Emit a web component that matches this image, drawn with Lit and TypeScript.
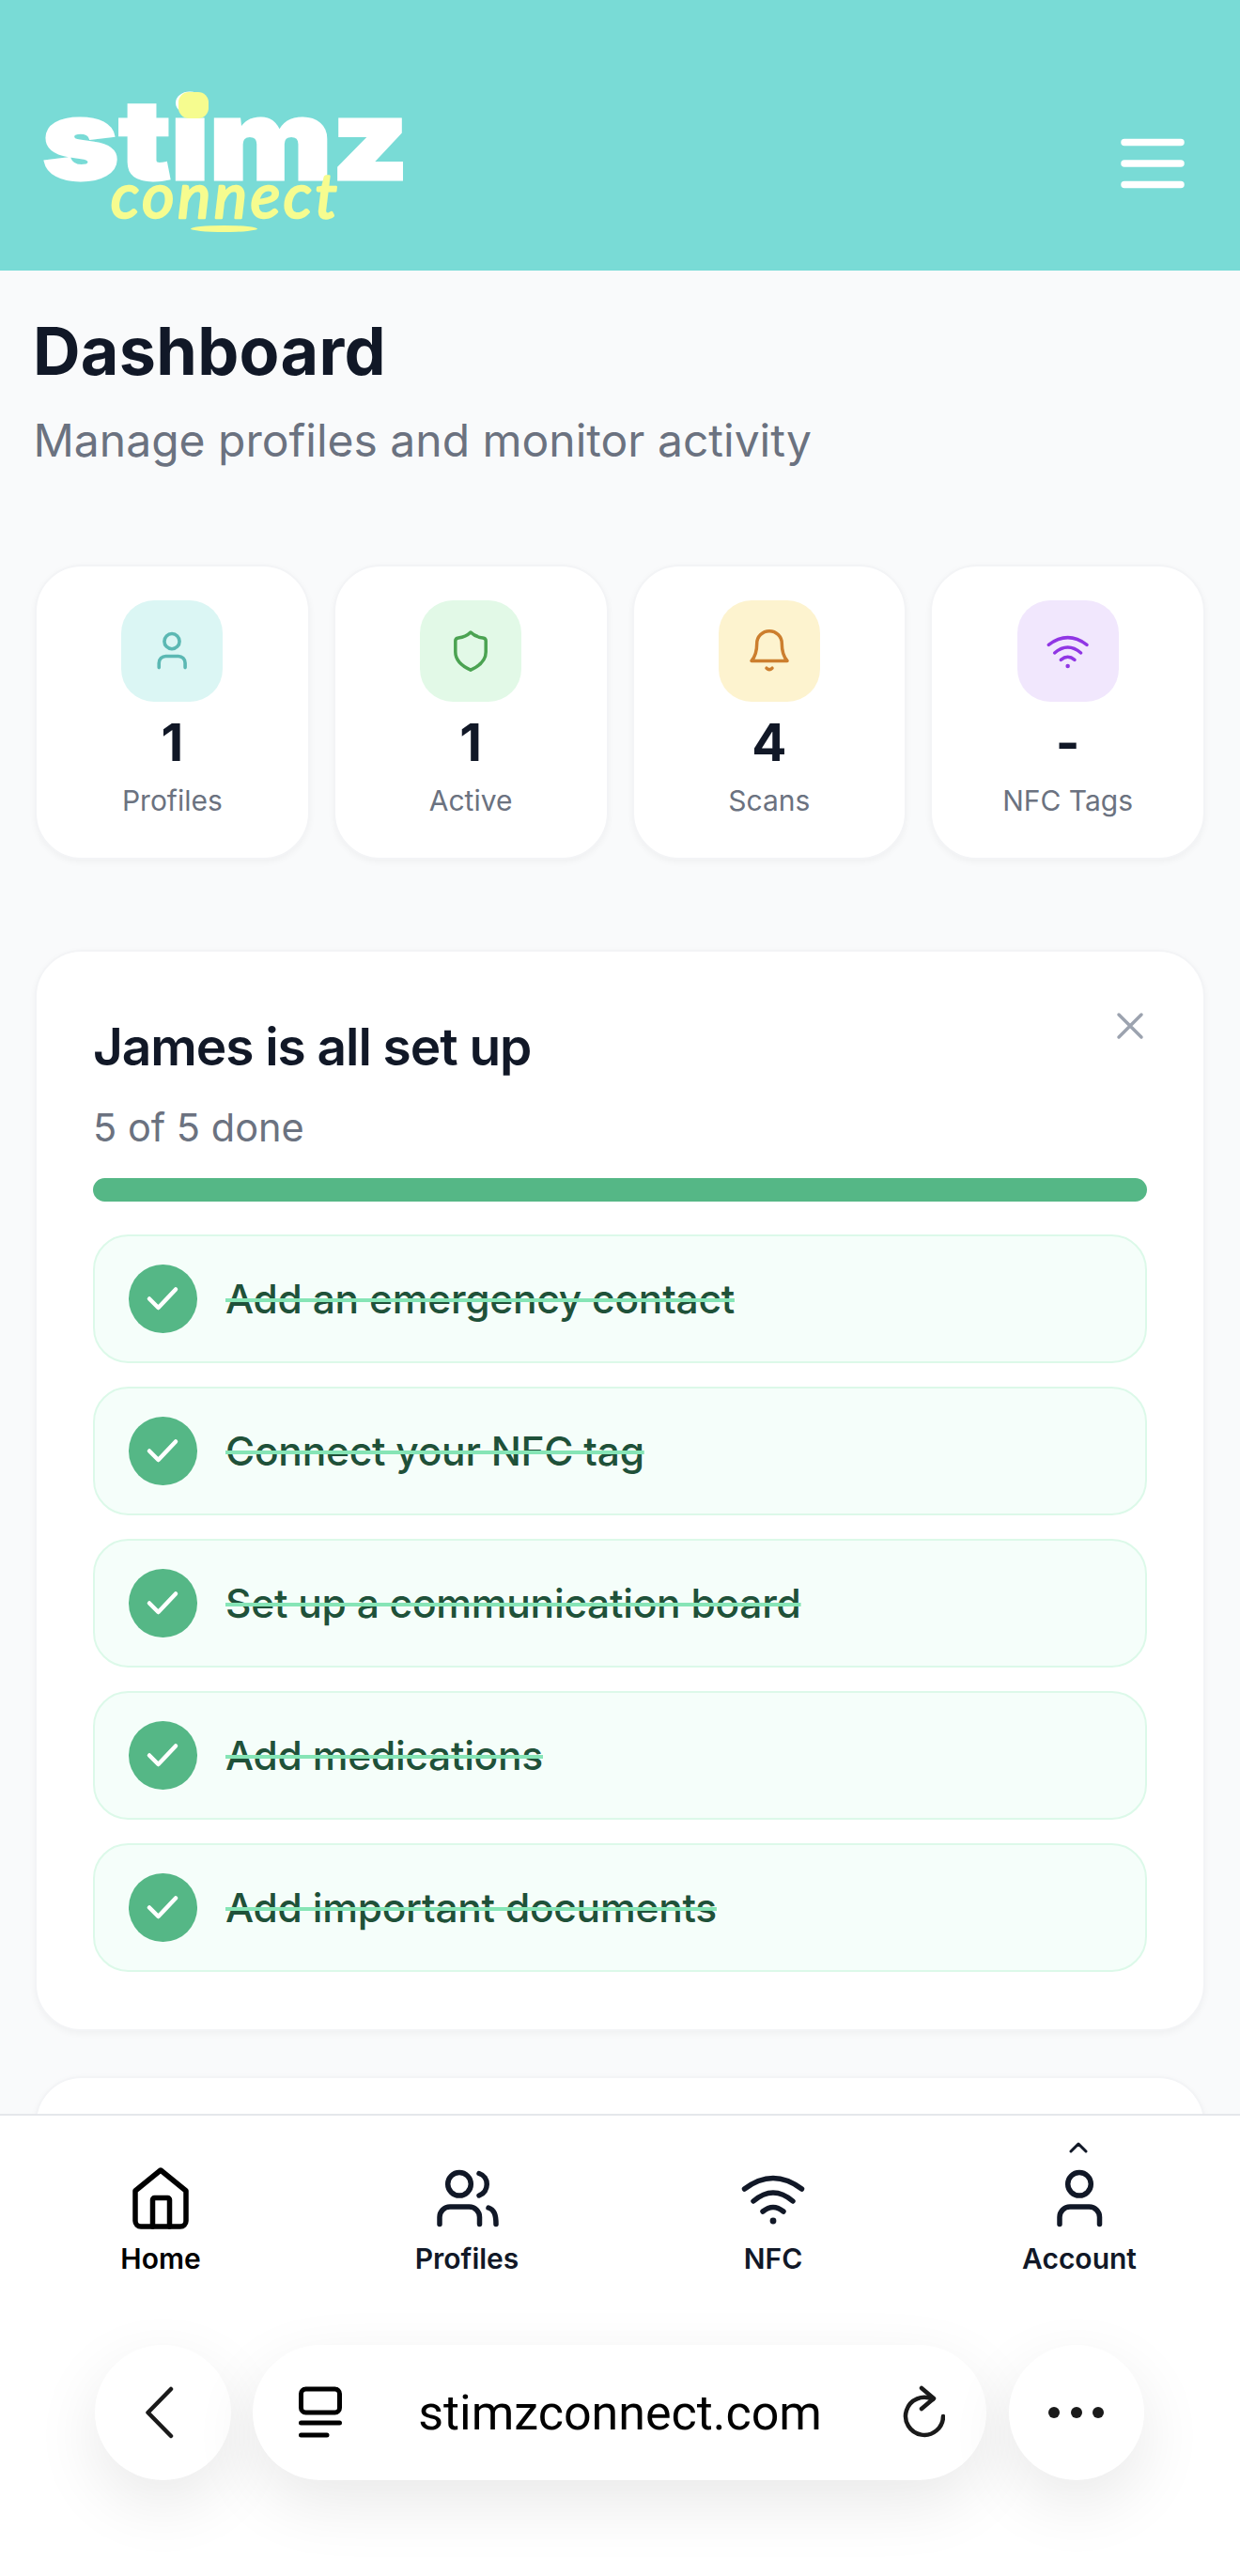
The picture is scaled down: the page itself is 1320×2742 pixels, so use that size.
import { LitElement, html, css, svg } from "lit";
import { customElement } from "lit/decorators.js";

const personPaths = svg`<circle cx="29" cy="20.8" r="12.3"/><path d="M8 63.5V56A11 11 0 0 1 19 45H39.5A11 11 0 0 1 50.5 56V63.5"/>`;
const wifiPaths = svg`<path d="M9.5 26Q40 3 70.5 26"/><path d="M19 39Q40 21 61 39"/><path d="M29 50Q40 41 51 50"/><circle cx="40" cy="60" r="3.4" fill="currentColor" stroke="none"/>`;

const tasks = [
  "Add an emergency contact",
  "Connect your NFC tag",
  "Set up a communication board",
  "Add medications",
  "Add important documents",
];

@customElement("app-root")
export class AppRoot extends LitElement {
  static styles = css`
    :host {
      display: flex;
      flex-direction: column;
      height: 2742px;
      overflow: hidden;
      background: #f9fafb;
      font-family: Inter, "Liberation Sans", sans-serif;
      color: #111827;
    }
    svg { display: block; flex: none; }
    .line { fill: none; stroke: currentColor; stroke-linecap: round; stroke-linejoin: round; }
    .header {
      flex: none;
      height: 288px;
      box-sizing: border-box;
      padding: 60px 48px 0 37px;
      background: #79dbd6;
      display: flex;
      align-items: center;
      justify-content: space-between;
    }
    .burger { color: #fff; }
    .logo-main { font-family: Inter, sans-serif; font-weight: 900; font-size: 117px; fill: #fff; stroke: #fff; stroke-width: 3px; }
    .logo-sub { font-family: Lato, sans-serif; font-style: italic; font-weight: 400; font-size: 66px; fill: #f6fc8f; stroke: #f6fc8f; stroke-width: 2.5px; stroke-linejoin: round; }
    .logo-dot { fill: #f6fc8f; }

    .main { flex: 1; min-height: 0; overflow: hidden; padding: 0 37px; }
    h1 { margin: 40.5px 0 0 -2px; font-size: 70px; line-height: 90px; font-weight: 700; letter-spacing: 0.3px; }
    .subtitle { margin: 15px 0 0 -1.5px; font-size: 48px; line-height: 70px; color: #6b7280; }

    .stats { display: grid; grid-template-columns: repeat(4, 1fr); gap: 25px; margin-top: 97px; }
    .stat {
      box-sizing: border-box;
      height: 314px;
      padding-top: 36px;
      background: #fff;
      border: 2.5px solid #f3f4f6;
      border-radius: 50px;
      box-shadow: 0 2.5px 7px rgba(0, 0, 0, 0.04);
      display: flex;
      flex-direction: column;
      align-items: center;
    }
    .tile { width: 108px; height: 108px; border-radius: 35px; display: flex; align-items: center; justify-content: center; }
    .tile.teal { background: #dbf6f4; color: #5bb8b3; }
    .tile.green { background: #e2f9e7; color: #4ba352; }
    .tile.amber { background: #fdf3cf; color: #cc7e2e; }
    .tile.purple { background: #f1e7fd; color: #9036e4; }
    .num { margin-top: 8px; font-size: 55px; line-height: 70px; font-weight: 700; }
    .label { margin-top: 5px; font-size: 30px; line-height: 45px; color: #6b7280; }

    .card {
      box-sizing: border-box;
      margin-top: 96.5px;
      padding: 65.5px 60px 60.5px;
      background: #fff;
      border: 2.5px solid #f3f4f6;
      border-radius: 50px;
      box-shadow: 0 2.5px 7px rgba(0, 0, 0, 0.04);
    }
    .next { margin-top: 48.5px; height: 400px; }
    .card-top { display: flex; justify-content: space-between; align-items: flex-start; }
    h2 { margin: 0; font-size: 55px; line-height: 70px; font-weight: 600; letter-spacing: -1.05px; }
    .close { margin-top: -5px; color: #9ca3af; }
    .done { margin: 21px 0 0; font-size: 41.5px; line-height: 60px; color: #6b7280; }
    .progress { margin-top: 24px; height: 25px; border-radius: 12.5px; background: #55b786; }
    .rows { display: flex; flex-direction: column; gap: 24.5px; margin-top: 35px; }
    .row {
      box-sizing: border-box;
      height: 137.5px;
      padding: 0 36px;
      display: flex;
      align-items: center;
      gap: 30.5px;
      background: #f5fefa;
      border: 2.5px solid #dcf9e9;
      border-radius: 37.5px;
    }
    .tick { width: 72.5px; height: 72.5px; border-radius: 50%; background: #55b786; color: #fff; display: flex; align-items: center; justify-content: center; flex: none; }
    .row-text {
      padding-top: 2px;
      font-size: 42.5px;
      line-height: 60px;
      font-weight: 500;
      letter-spacing: -0.25px;
      color: #1f5139;
      text-decoration: line-through;
      text-decoration-color: #86e5b6;
      text-decoration-thickness: 3.5px;
    }

    .bottom { flex: none; height: 492px; box-sizing: border-box; background: #fff; border-top: 2.5px solid #e5e7eb; }
    .nav { display: grid; grid-template-columns: repeat(4, 1fr); padding: 51.5px 8px 0; }
    .nav-item { position: relative; display: flex; flex-direction: column; align-items: center; color: #111827; }
    .nav-item.active { color: #000; }
    .nav-label { margin-top: 8px; font-size: 30px; line-height: 40px; font-weight: 600; }
    .caret { position: absolute; top: -24px; left: 50%; margin-left: -11px; }
    .browser { display: flex; gap: 23.7px; margin-top: 72px; padding-left: 101px; color: #1a1a1a; }
    .round, .pill {
      box-sizing: border-box;
      height: 144.5px;
      background: #fff;
      box-shadow: 0 24px 70px rgba(0, 0, 0, 0.09);
      display: flex;
      align-items: center;
    }
    .round { width: 144.5px; border-radius: 50%; justify-content: center; }
    .pill { width: 780.8px; border-radius: 72.25px; padding: 0 44px 0 49px; justify-content: space-between; }
    .url { font-size: 52px; line-height: 60px; color: #000; font-family: Roboto, Inter, sans-serif; margin-left: -4px; padding-top: 2px; }
    .dots { display: flex; gap: 11.5px; }
    .dots span { width: 12px; height: 12px; border-radius: 50%; background: #1a1a1a; }
  `;

  private person(w: number, sw: number) {
    return html`<svg class="line" width=${w} height=${(w * 72) / 58} viewBox="0 0 58 72" stroke-width=${sw}>${personPaths}</svg>`;
  }

  private wifi(w: number, sw: number) {
    return html`<svg class="line" width=${w} height=${(w * 72) / 80} viewBox="0 0 80 72" stroke-width=${sw}>${wifiPaths}</svg>`;
  }

  render() {
    return html`
      <header class="header">
        <svg width="410" height="190" viewBox="37 79 410 190" role="img" aria-label="stimz connect">
          <text class="logo-main" x="45" y="191" textLength="390" lengthAdjust="spacingAndGlyphs">stimz</text>
          <rect class="logo-dot" x="190" y="98" width="32" height="28" rx="11"></rect>
          <text class="logo-sub" x="118" y="232" textLength="241" lengthAdjust="spacing">connect</text>
          <ellipse class="logo-dot" cx="238.5" cy="243.5" rx="35.5" ry="3.5"></ellipse>
        </svg>
        <svg class="line burger" width="90" height="90" viewBox="0 0 24 24" stroke-width="2">
          <path d="M4 6H20M4 12H20M4 18H20"/>
        </svg>
      </header>

      <main class="main">
        <h1>Dashboard</h1>
        <p class="subtitle">Manage profiles and monitor activity</p>

        <section class="stats">
          <div class="stat">
            <div class="tile teal">${this.person(38, 5.5)}</div>
            <div class="num">1</div>
            <div class="label">Profiles</div>
          </div>
          <div class="stat">
            <div class="tile green">
              <svg class="line" width="50" height="50" viewBox="0 0 50 50" stroke-width="3.5">
                <path d="M25 5Q30 10 38 11Q41.2 11.5 41.2 14V26C41.2 36 32 42 25 45.2C18 42 8.8 36 8.8 26V14Q8.8 11.5 12 11Q20 10 25 5Z"/>
              </svg>
            </div>
            <div class="num">1</div>
            <div class="label">Active</div>
          </div>
          <div class="stat">
            <div class="tile amber">
              <svg class="line" width="50" height="50" viewBox="0 0 50 50" stroke-width="3.5">
                <path d="M6 35.5H44C41 32 38.3 27 38.3 17A13.3 13.3 0 0 0 11.7 17C11.7 27 9 32 6 35.5Z"/>
                <path d="M22 43.2Q25 46 28 43.2"/>
              </svg>
            </div>
            <div class="num">4</div>
            <div class="label">Scans</div>
          </div>
          <div class="stat">
            <div class="tile purple">${this.wifi(53.3, 5.25)}</div>
            <div class="num">-</div>
            <div class="label">NFC Tags</div>
          </div>
        </section>

        <section class="card">
          <div class="card-top">
            <h2>James is all set up</h2>
            <svg class="line close" width="36" height="36" viewBox="0 0 36 36" stroke-width="3.5">
              <path d="M6 6L30 30M30 6L6 30"/>
            </svg>
          </div>
          <p class="done">5 of 5 done</p>
          <div class="progress"></div>
          <div class="rows">
            ${tasks.map(
              (t) => html`<div class="row">
                <span class="tick">
                  <svg class="line" width="40" height="40" viewBox="0 0 40 40" stroke-width="4.5">
                    <path d="M6 20.5L15.5 30L34 10.5"/>
                  </svg>
                </span>
                <span class="row-text">${t}</span>
              </div>`
            )}
          </div>
        </section>
        <section class="card next"></section>
      </main>

      <footer class="bottom">
        <nav class="nav">
          <div class="nav-item active">
            <svg class="line" width="70" height="72" viewBox="0 0 70 72" stroke-width="5.5">
              <path d="M35 6L62 28V60A6 6 0 0 1 56 66H14A6 6 0 0 1 8 60V28Z"/>
              <path d="M26.5 66V37.5A2 2 0 0 1 28.5 35.5H42.5A2 2 0 0 1 44.5 37.5V66"/>
            </svg>
            <span class="nav-label">Home</span>
          </div>
          <div class="nav-item">
            <svg class="line" width="75" height="72" viewBox="0 0 75 72" stroke-width="5.5">
              ${personPaths}
              <path d="M50 9.5C61 13 61 29 50 33"/>
              <path d="M60 46C66 48 68 53 68 63.5"/>
            </svg>
            <span class="nav-label">Profiles</span>
          </div>
          <div class="nav-item">
            ${this.wifi(80, 5.5)}
            <span class="nav-label">NFC</span>
          </div>
          <div class="nav-item">
            <svg class="line caret" width="20" height="12" viewBox="0 0 20 12" stroke-width="3">
              <path d="M2 10L10 2L18 10"/>
            </svg>
            ${this.person(58, 5.5)}
            <span class="nav-label">Account</span>
          </div>
        </nav>
        <div class="browser">
          <div class="round">
            <svg class="line" width="37" height="56" viewBox="0 0 37 56" stroke-width="4.5">
              <path d="M27 3L2.5 28L27 53"/>
            </svg>
          </div>
          <div class="pill">
            <svg class="line" width="46" height="56" viewBox="0 0 46 56" stroke-width="5" style="color:#000">
              <rect x="2.5" y="3" width="41" height="25" rx="5"/>
              <path d="M2.5 39H43.5M2.5 52H30"/>
            </svg>
            <span class="url">stimzconnect.com</span>
            <svg class="line" width="46" height="58" viewBox="0 0 46 58" stroke-width="4.5">
              <path d="M44 33A20 20 0 1 1 33 15"/>
              <path d="M21 3L34 14L21 25"/>
            </svg>
          </div>
          <div class="round">
            <div class="dots"><span></span><span></span><span></span></div>
          </div>
        </div>
      </footer>
    `;
  }
}
